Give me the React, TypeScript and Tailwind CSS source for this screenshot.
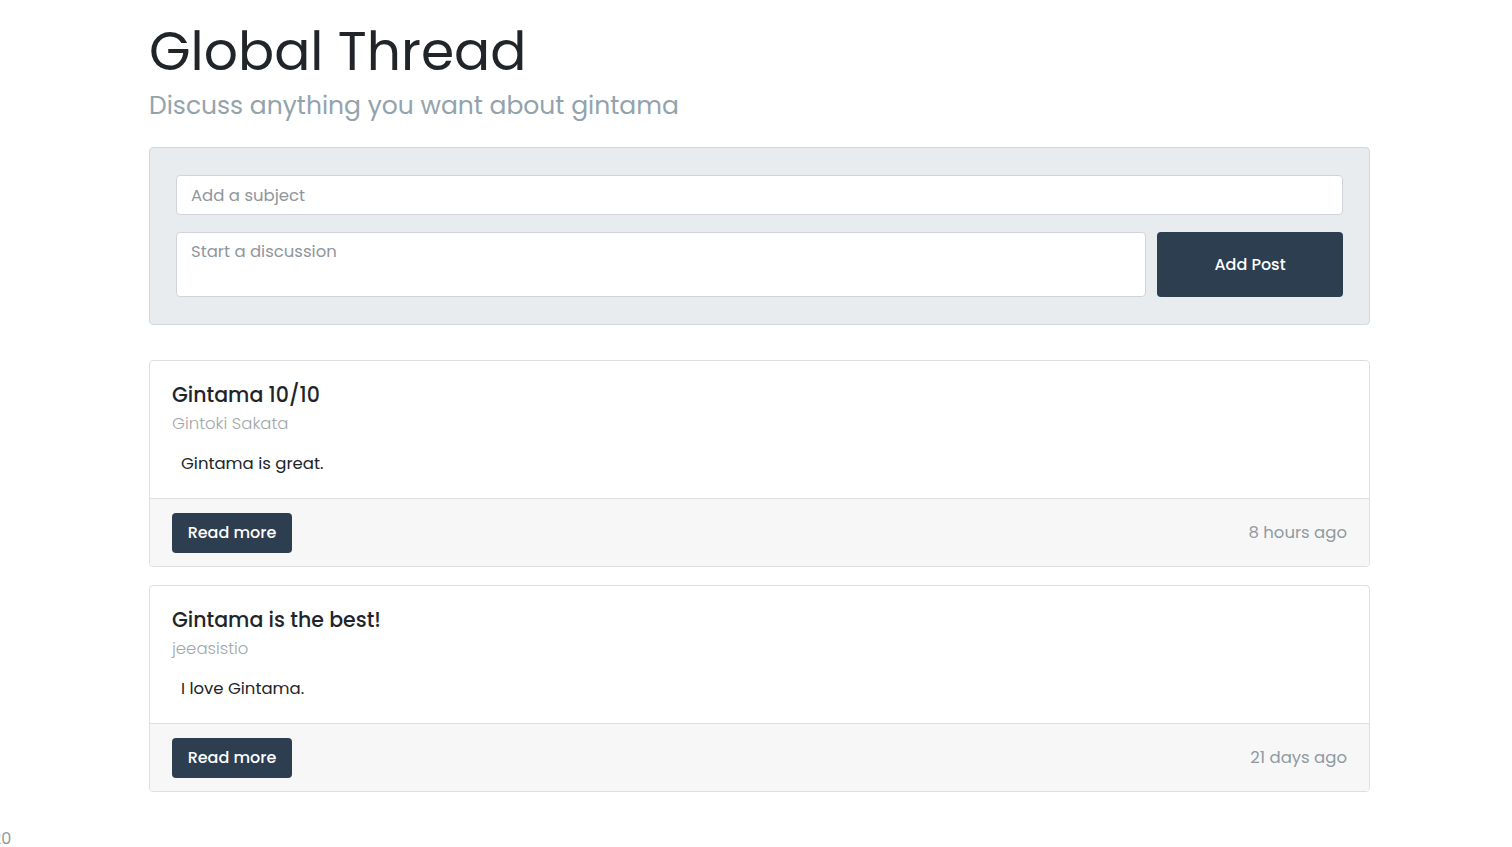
const posts = [
  { title: "Gintama 10/10", author: "Gintoki Sakata", body: "Gintama is great.", ago: "8 hours ago" },
  { title: "Gintama is the best!", author: "jeeasistio", body: "I love Gintama.", ago: "21 days ago" },
];

function PostCard({ post }: { post: (typeof posts)[number] }) {
  return (
    <div className="border border-[#dfdfdf] rounded-[4px] bg-white">
      <div className="px-[22px] pt-[19px] pb-[22px]">
        <h5 className="text-[20.5px] leading-[30px] font-medium text-[#212529]">{post.title}</h5>
        <h6 className="mt-[2px] text-[16.5px] leading-[24px] font-light text-[#a3a7ab]">{post.author}</h6>
        <p className="mt-[16px] ml-[9px] text-[16.5px] leading-[24px] text-[#212529]">{post.body}</p>
      </div>
      <div className="flex items-center justify-between border-t border-[#dfdfdf] bg-[#f7f7f7] px-[22px] pt-[14px] pb-[13px] rounded-b-[4px]">
        <button className="h-[40px] w-[120px] rounded-[4px] bg-[#2c3e50] text-white text-[16px] font-medium">
          Read more
        </button>
        <span className="text-[16.5px] text-[#8f9aa1]">{post.ago}</span>
      </div>
    </div>
  );
}

export default function App() {
  return (
    <div className="min-h-screen bg-white font-['Poppins','Open_Sans',sans-serif] text-[#212529]">
      <div className="ml-[149px] w-[1221px] pt-[20px]">
        <h1 className="text-[53.5px] leading-[64px] font-normal text-[#212529]">Global Thread</h1>
        <p className="mt-[5px] text-[25px] leading-[34px] text-[#93a3ac]">Discuss anything you want about gintama</p>

        <div className="mt-[24px] bg-[#e9ecef] border border-[#d5d8db] rounded-[4px] px-[26px] py-[27px] flex flex-col gap-[17px]">
          <input
            placeholder="Add a subject"
            className="h-[40px] w-full bg-white border border-[#ced4da] rounded-[4px] px-[14px] text-[16.5px] placeholder:text-[#8f969c] outline-none"
          />
          <div className="flex gap-[11px]">
            <textarea
              placeholder="Start a discussion"
              className="flex-1 h-[65px] resize-none bg-white border border-[#ced4da] rounded-[4px] px-[14px] py-[7px] text-[16.5px] leading-[24px] placeholder:text-[#8f969c] outline-none"
            />
            <button className="w-[186px] h-[65px] rounded-[4px] bg-[#2c3e50] text-white text-[16px] font-medium">
              Add Post
            </button>
          </div>
        </div>

        <div className="mt-[35px] flex flex-col gap-[18px]">
          {posts.map((p) => (
            <PostCard key={p.title} post={p} />
          ))}
        </div>
      </div>
      <div className="mt-[35px] -ml-[8px] text-[16px] leading-[24px] text-[#8f9aa1]">20</div>
    </div>
  );
}
